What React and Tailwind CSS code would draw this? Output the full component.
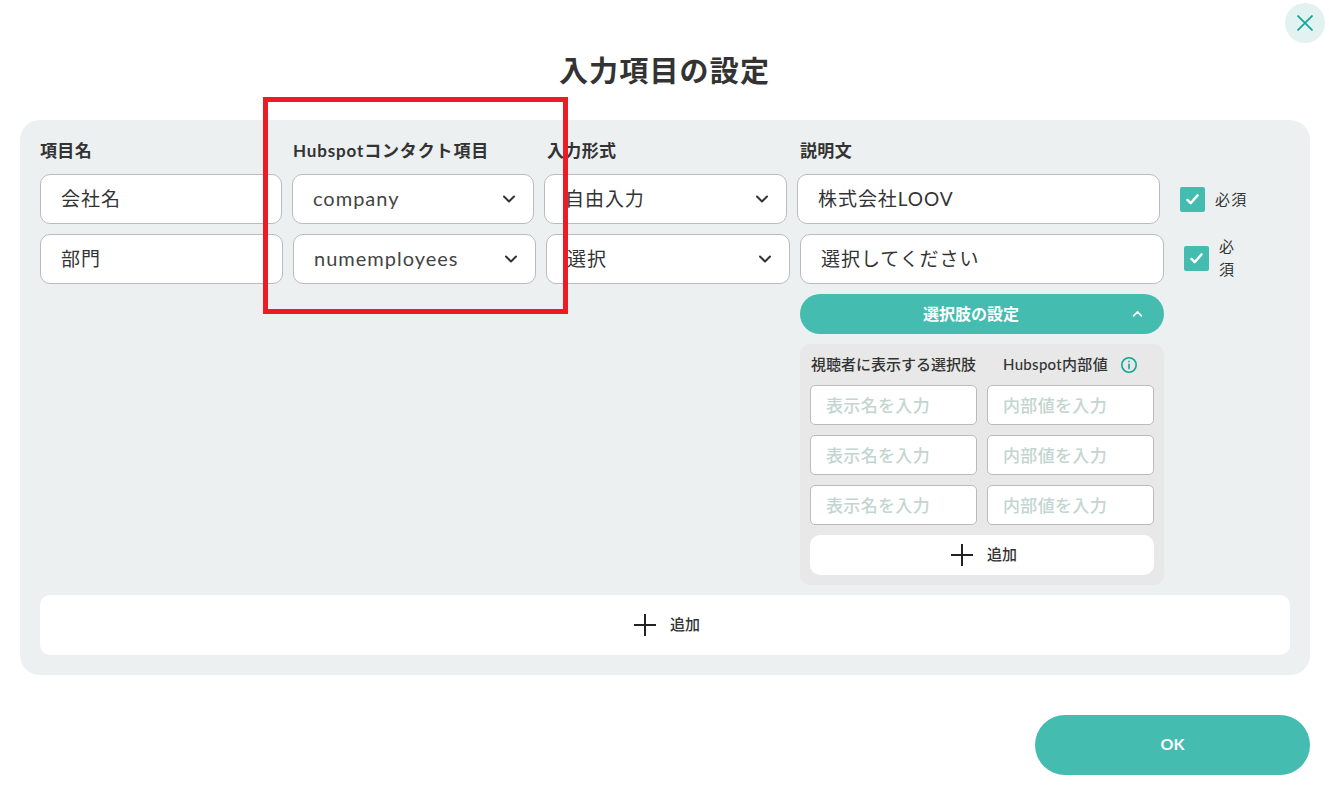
import React from "react";

const FF = "font-['Lato','Noto_Sans_CJK_JP',sans-serif]";

function Chevron({ up = false, className = "w-[14px] h-[8px]" }) {
  return (
    <svg viewBox="0 0 14 8" className={className} fill="none" stroke="currentColor" strokeWidth="2" strokeLinecap="round" strokeLinejoin="round">
      <path d={up ? "M2 7L7 2L12 7" : "M2 1.5L7 6.5L12 1.5"} />
    </svg>
  );
}

function Plus() {
  return (
    <svg viewBox="0 0 22 22" className="w-[22px] h-[22px] text-[#222]" fill="none" stroke="currentColor" strokeWidth="2">
      <path d="M11 0V22M0 11H22" />
    </svg>
  );
}

function Check({ className = "" }) {
  return (
    <div className={`w-[25px] h-[25px] shrink-0 rounded-[2px] bg-[#44bdb0] flex items-center justify-center ${className}`}>
      <svg viewBox="0 0 14 12" className="w-[13px] h-[11px]" fill="none" stroke="white" strokeWidth="2.6" strokeLinecap="round" strokeLinejoin="round">
        <path d="M1.5 6.5L5 10L12.5 1.5" />
      </svg>
    </div>
  );
}

function Field({ w, children }) {
  return (
    <div className={`${w} h-[50px] shrink-0 bg-white border border-[#bbbbbb] rounded-[10px] pl-5 flex items-center text-[19px] text-[#333] tracking-[0.05em]`}>
      {children}
    </div>
  );
}

function Select({ w, latin = false, children }) {
  return (
    <div className={`${w} h-[50px] shrink-0 bg-white border border-[#bbbbbb] rounded-[10px] pl-5 pr-[17px] flex items-center justify-between ${latin ? "text-[20px] tracking-[0.05em] text-[#444]" : "text-[19px] tracking-[0.05em] text-[#333]"}`}>
      <span className={latin ? "pb-[2px]" : ""}>{children}</span>
      <span className="text-[#333]"><Chevron /></span>
    </div>
  );
}

function Small({ children }) {
  return (
    <div className="h-10 bg-white border border-[#bbbbbb] rounded-[5px] pl-[15px] pt-px flex items-center text-[17px] tracking-[0.02em] text-[#c3d5d0] font-medium">
      {children}
    </div>
  );
}

export default function App() {
  return (
    <div className={`relative w-[1329px] h-[795px] bg-white overflow-hidden text-[#333] ${FF}`}>
      <div className="absolute left-[1285px] top-[3px] w-10 h-10 rounded-full bg-[#e2f2f0] flex items-center justify-center">
        <svg viewBox="0 0 16 16" className="w-4 h-4 text-[#10a594]" fill="none" stroke="currentColor" strokeWidth="1.7">
          <path d="M0.5 0.5L15.5 15.5M15.5 0.5L0.5 15.5" />
        </svg>
      </div>

      <div className="px-5 pt-[50px]">
        <h1 className="h-[42px] text-center text-[29px] leading-[42px] font-bold tracking-[0.04em]">入力項目の設定</h1>

        <div className="mt-7 w-[1290px] h-[555px] bg-[#ecf0f1] rounded-[20px] px-5 pt-5 pb-5 flex flex-col">
          <div className="flex h-[22px] items-center text-[17px] font-bold leading-6 tracking-[0.02em]">
            <span className="w-[253px]">項目名</span>
            <span className="w-[254px] tracking-[0.05em] whitespace-nowrap">Hubspotコンタクト項目</span>
            <span className="w-[253px]">入力形式</span>
            <span>説明文</span>
          </div>

          <div className="mt-3 flex gap-[10px] items-center h-[50px]">
            <Field w="w-[242px]">会社名</Field>
            <Select w="w-[242px]" latin>company</Select>
            <Select w="w-[243px]">自由入力</Select>
            <Field w="w-[363px]">株式会社LOOV</Field>
            <Check className="ml-[10px]" />
            <span className="text-[15px] tracking-[0.08em] whitespace-nowrap">必須</span>
          </div>

          <div className="mt-[10px] flex gap-[10px] items-start flex-1">
            <Field w="w-[243px]">部門</Field>
            <Select w="w-[243px]" latin>numemployees</Select>
            <Select w="w-[244px]">選択</Select>
            <div className="w-[364px] shrink-0 flex flex-col gap-[10px]">
              <Field w="w-full">選択してください</Field>
              <div className="relative h-10 rounded-full bg-[#44bdb0] flex items-center justify-center pr-[22px] text-white text-[16px] font-bold">
                選択肢の設定
                <Chevron up className="absolute right-[21px] top-4 w-[11px] h-[7px]" />
              </div>
              <div className="bg-[#e8e8e8] rounded-[10px] p-[10px] pt-0 h-[241px] flex flex-col">
                <div className="h-[41px] grid grid-cols-2 gap-[10px] items-center text-[15px] font-medium leading-none">
                  <span className="whitespace-nowrap pl-px">視聴者に表示する選択肢</span>
                  <span className="flex items-center pl-[16px] whitespace-nowrap tracking-[0.02em]">
                    Hubspot内部値
                    <svg viewBox="0 0 18 18" className="w-[18px] h-[18px] ml-[12px] text-[#10a594]" fill="none" stroke="currentColor" strokeWidth="1.6" strokeLinecap="round">
                      <circle cx="9" cy="9" r="7.2" />
                      <path d="M9 8.3V12.6M9 5.4V5.6" />
                    </svg>
                  </span>
                </div>
                <div className="grid grid-cols-2 gap-[10px]">
                  <Small>表示名を入力</Small>
                  <Small>内部値を入力</Small>
                  <Small>表示名を入力</Small>
                  <Small>内部値を入力</Small>
                  <Small>表示名を入力</Small>
                  <Small>内部値を入力</Small>
                </div>
                <div className="mt-[10px] h-10 bg-white rounded-[10px] flex items-center justify-center gap-[14px] pl-[4px] text-[15px] font-medium">
                  <Plus />
                  <span className="pb-[2px]">追加</span>
                </div>
              </div>
            </div>
            <Check className="ml-[10px] mt-[12px]" />
            <span className="w-[26px] text-[15px] leading-[23px] tracking-[0.05em] mt-[1px]">必須</span>
          </div>

          <div className="mt-[10px] h-[60px] bg-white rounded-[10px] flex items-center justify-center gap-[14px] pl-[4px] text-[15px] font-medium shrink-0">
            <Plus />
            <span className="pb-[2px]">追加</span>
          </div>
        </div>

        <div className="mt-10 flex justify-end w-[1290px]">
          <div className="w-[275px] h-[60px] pb-[2px] rounded-full bg-[#44bdb0] text-white font-bold text-[16px] flex items-center justify-center">OK</div>
        </div>
      </div>

      <div className="absolute left-[263px] top-[97px] w-[305px] h-[217px] border-[5px] border-[#ed1c24] pointer-events-none" />
    </div>
  );
}
